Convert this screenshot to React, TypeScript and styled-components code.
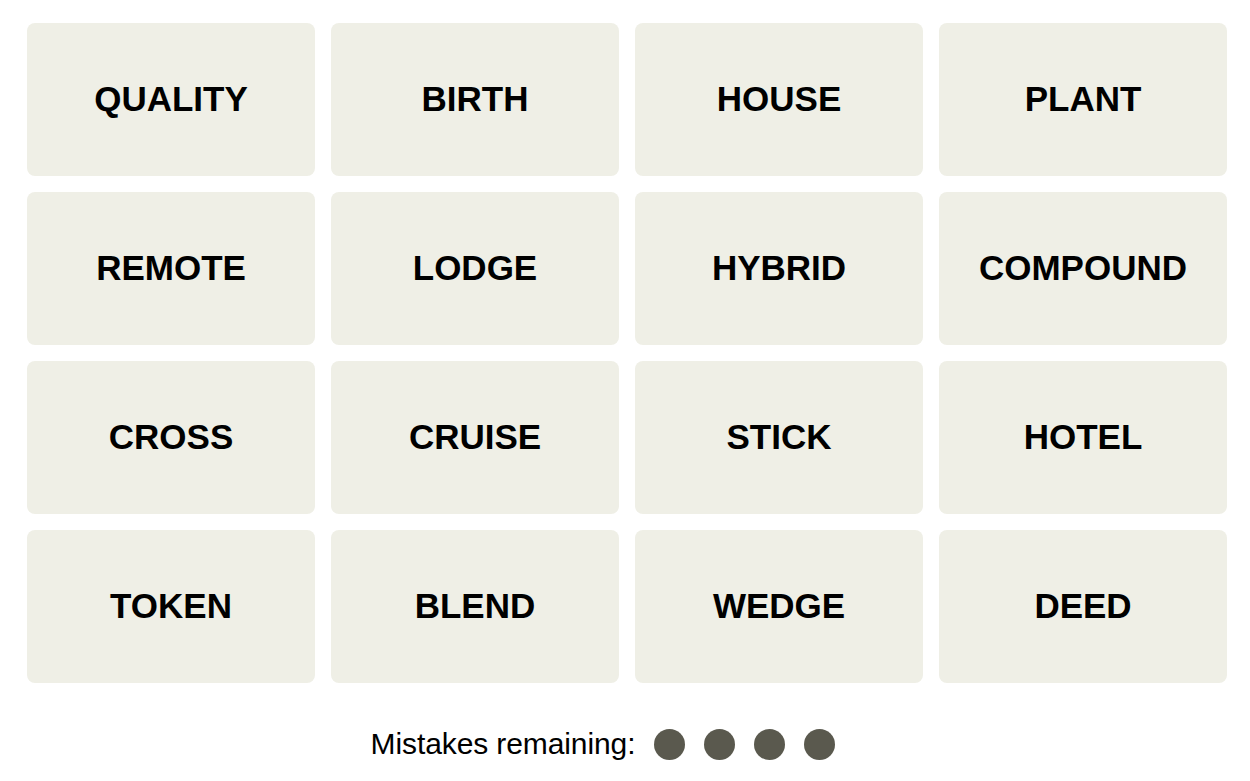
import React from "react";
import styled, { createGlobalStyle } from "styled-components";

const Global = createGlobalStyle`
  html, body { margin: 0; padding: 0; background: #ffffff; }
  body { font-family: "Liberation Sans", Arial, sans-serif; }
`;

const Page = styled.div`
  width: 1250px;
  height: 781px;
  box-sizing: border-box;
  padding: 23px 23px 0 27px;
  display: flex;
  flex-direction: column;
`;

const Grid = styled.div`
  display: grid;
  grid-template-columns: repeat(4, 288px);
  grid-auto-rows: 153px;
  gap: 16px;
`;

const Tile = styled.button`
  border: none;
  border-radius: 8px;
  background: #efefe6;
  color: #000000;
  font-family: "Liberation Sans", Arial, sans-serif;
  font-weight: 700;
  font-size: 35px;
  letter-spacing: 0px;
  display: flex;
  align-items: center;
  justify-content: center;
  padding: 0 0 2px 0;
  text-transform: uppercase;
`;

const Mistakes = styled.div`
  display: flex;
  align-items: center;
  justify-content: center;
  margin-top: 44px;
  padding-right: 48px;
  gap: 19px;
`;

const Label = styled.span`
  font-family: "Liberation Sans", Arial, sans-serif;
  font-size: 30px;
  color: #000000;
  letter-spacing: -0.1px;
`;

const Dots = styled.div`
  display: flex;
  gap: 19px;
`;

const Dot = styled.span`
  width: 31px;
  height: 31px;
  border-radius: 50%;
  background: #5a594e;
`;

const words = [
  "QUALITY", "BIRTH", "HOUSE", "PLANT",
  "REMOTE", "LODGE", "HYBRID", "COMPOUND",
  "CROSS", "CRUISE", "STICK", "HOTEL",
  "TOKEN", "BLEND", "WEDGE", "DEED",
];

export default function App() {
  return (
    <>
      <Global />
      <Page>
        <Grid>
          {words.map((w) => (
            <Tile key={w}>{w}</Tile>
          ))}
        </Grid>
        <Mistakes>
          <Label>Mistakes remaining:</Label>
          <Dots>
            {[0, 1, 2, 3].map((i) => (
              <Dot key={i} />
            ))}
          </Dots>
        </Mistakes>
      </Page>
    </>
  );
}
